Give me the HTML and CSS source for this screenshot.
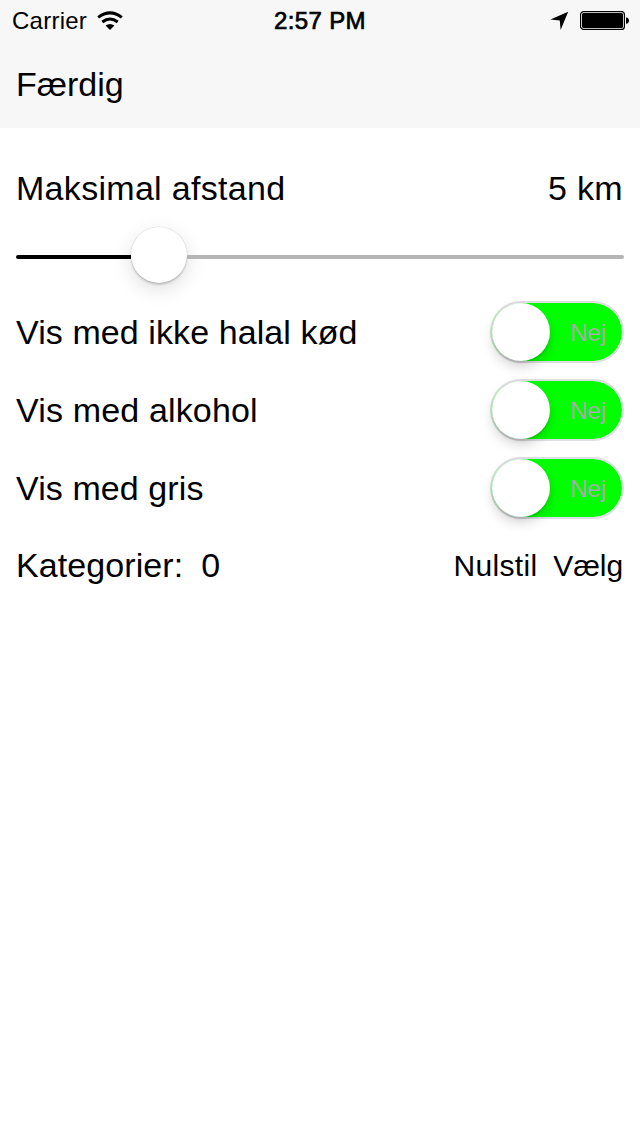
FILE: index.html
```html
<!DOCTYPE html>
<html lang="da">
<head>
<meta charset="utf-8">
<title>Indstillinger</title>
<link rel="stylesheet" href="styles.css">
</head>
<body>
<header class="header">
  <div class="status">
    <div class="status-left">
      <span class="carrier">Carrier</span>
      <svg class="wifi" width="26" height="20" viewBox="0 0 26 20">
        <path d="M1.2 6.4Q13 -2.6 24.8 6.4" fill="none" stroke="#000" stroke-width="3"/>
        <path d="M5.3 11Q13 5 20.7 11" fill="none" stroke="#000" stroke-width="3"/>
        <path d="M13 19L8.6 14.6Q13 11.2 17.4 14.6z"/>
      </svg>
    </div>
    <span class="time">2:57 PM</span>
    <div class="status-right">
      <svg width="20" height="20" viewBox="0 0 20 20"><path d="M18.2 1.8L10.6 20L9.8 10.6L0.4 9.6z"/></svg>
      <svg class="battery" width="50" height="20" viewBox="0 0 50 20">
        <rect x=".6" y=".6" width="43.8" height="17.8" rx="3" fill="#fff" stroke="#000" stroke-width="1.2"/>
        <rect x="2" y="2" width="41" height="15" rx="1.5"/>
        <path d="M46 6.2c4 .6 4 6 0 6.6z"/>
      </svg>
    </div>
  </div>
  <nav class="nav"><span class="done">Færdig</span></nav>
</header>
<main class="content">
  <div class="row row-distance"><span class="t-max">Maksimal afstand</span><span class="t-km">5 km</span></div>
  <div class="slider">
    <div class="track-fill"></div>
    <div class="thumb"></div>
    <div class="track-rest"></div>
  </div>
  <div class="row"><span class="label">Vis med ikke halal kød</span><div class="switch"><div class="knob"></div><span class="off">Nej</span></div></div>
  <div class="row"><span class="label label-alcohol">Vis med alkohol</span><div class="switch"><div class="knob"></div><span class="off">Nej</span></div></div>
  <div class="row"><span class="label">Vis med gris</span><div class="switch"><div class="knob"></div><span class="off">Nej</span></div></div>
  <div class="row row-categories">
    <div class="categories"><span class="label">Kategorier:</span><span>0</span></div>
    <div class="actions"><span class="reset">Nulstil</span><span class="pick">Vælg</span></div>
  </div>
</main>
</body>
</html>
```
FILE: styles.css
```css
* { box-sizing: border-box; }
body {
  margin: 0;
  height: 1136px;
  background: #fff;
  color: #000;
  font-family: "Liberation Sans", Arial, sans-serif;
  font-size: 34px;
  line-height: 40px;
  white-space: nowrap;
}
svg { display: block; }
.header { height: 128px; background: #f7f7f7; }
.status {
  display: grid;
  grid-template-columns: 1fr auto 1fr;
  height: 40px;
  padding: 0 10px;
  align-items: center;
  font-size: 24px;
  line-height: 38px;
}
.status-left { display: flex; padding-left: 2px; align-items: center; gap: 10px; }
.carrier { letter-spacing: 0.25px; padding-top: 2px; }
.wifi { margin-top: 1px; }
.time { -webkit-text-stroke: 0.7px #000; padding-top: 2px; letter-spacing: 0.35px; }
.status-right { display: flex; justify-content: flex-end; align-items: center; gap: 10px; }
.battery { margin-top: 2px; }
.nav { display: flex; height: 88px; padding: 0 16px; align-items: center; }
.content { padding: 40px 16px 0; }
.row { display: flex; height: 78px; justify-content: space-between; align-items: center; }
.row-distance { height: 40px; }
.t-max { letter-spacing: 0.3px; }
.t-km { letter-spacing: 0.3px; padding-right: 1px; }
.label { letter-spacing: 0.09px; }
.label-alcohol { letter-spacing: 0.16px; }
.slider { display: flex; height: 58px; margin: 18px 0 9px; align-items: center; }
.track-fill { width: 115px; height: 4px; margin-top: 4px; background: #000; border-radius: 2px 0 0 2px; }
.track-rest { flex: 1; height: 4px; margin-top: 4px; background: #b5b5b5; border-radius: 0 2px 2px 0; }
.thumb {
  width: 56px;
  height: 56px;
  border-radius: 50%;
  background: #fff;
  box-shadow: 0 0 0 .5px rgba(0,0,0,.1), 0 2px 2px rgba(0,0,0,.16), 0 6px 20px rgba(0,0,0,.13);
}
.switch {
  display: flex;
  width: 134px;
  height: 62px;
  padding-right: 16px;
  border: 2px solid #dedee2;
  border-left-color: #cce8d0;
  border-radius: 31px;
  background: #0f0;
  background-clip: padding-box;
  justify-content: space-between;
  align-items: center;
}
.knob {
  width: 58px;
  height: 58px;
  border-radius: 50%;
  background: #fff;
  box-shadow: 0 2px 2px rgba(0,0,0,.1), 0 6px 12px rgba(0,0,0,.16);
}
.off { font-size: 24px; color: #aaa; padding-top: 2px; }
.row-categories { height: 76px; }
.categories { display: flex; gap: 18px; }
.actions { display: flex; gap: 16px; font-size: 30px; padding: 1px 1px 0 0; }
.reset { letter-spacing: 0.3px; }
.pick { letter-spacing: -0.1px; }
```
